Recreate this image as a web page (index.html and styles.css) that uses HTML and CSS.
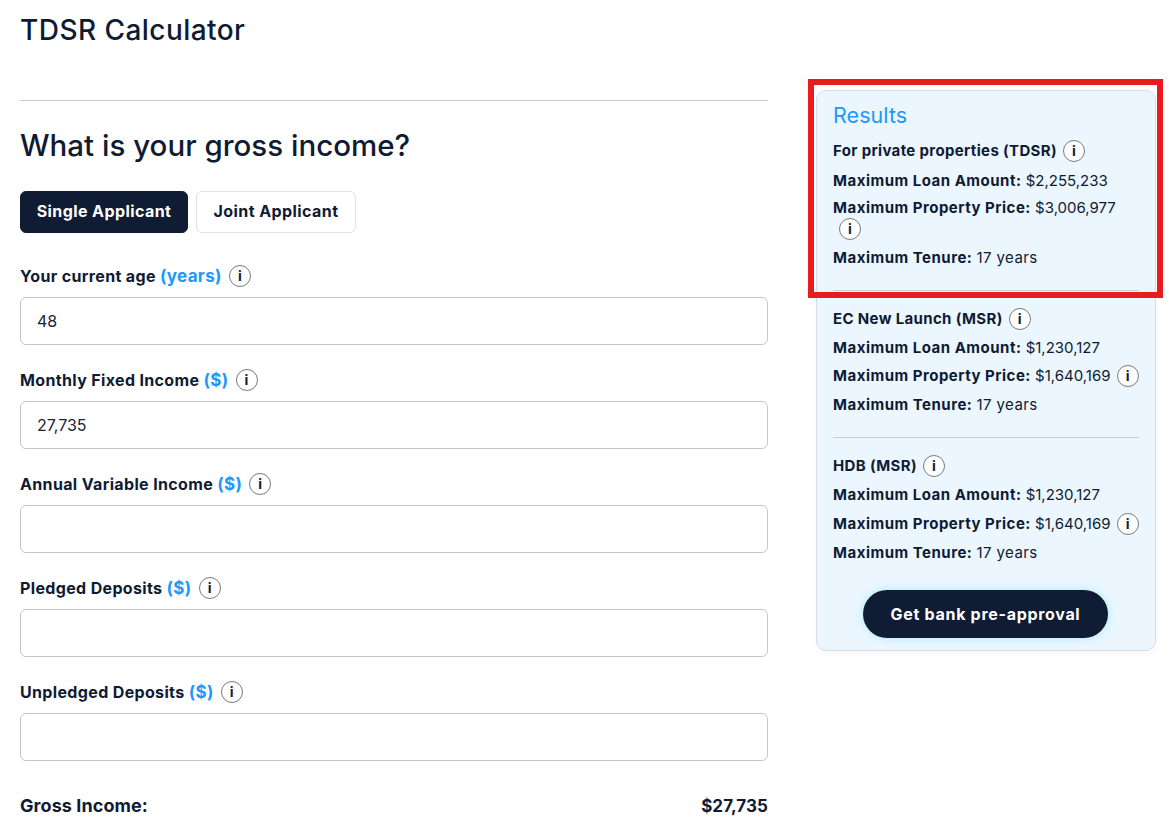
FILE: index.html
```html
<!DOCTYPE html>
<html lang="en">
<head>
<meta charset="utf-8">
<title>TDSR Calculator</title>
<link rel="stylesheet" href="styles.css">
</head>
<body>
<div class="page">
  <h1 class="title">TDSR Calculator</h1>
  <div class="columns">
    <main class="form">
      <hr class="form-rule">
      <h2 class="question">What is your gross income?</h2>
      <div class="tabs">
        <button class="tab tab-active">Single Applicant</button>
        <button class="tab">Joint Applicant</button>
      </div>
      <div class="field">
        <div class="label">Your current age <span class="unit">(years)</span><span class="info">i</span></div>
        <div class="input">48</div>
      </div>
      <div class="field">
        <div class="label">Monthly Fixed Income <span class="unit">($)</span><span class="info">i</span></div>
        <div class="input">27,735</div>
      </div>
      <div class="field">
        <div class="label">Annual Variable Income <span class="unit">($)</span><span class="info">i</span></div>
        <div class="input"></div>
      </div>
      <div class="field">
        <div class="label">Pledged Deposits <span class="unit">($)</span><span class="info">i</span></div>
        <div class="input"></div>
      </div>
      <div class="field">
        <div class="label">Unpledged Deposits <span class="unit">($)</span><span class="info">i</span></div>
        <div class="input"></div>
      </div>
      <div class="total"><span>Gross Income:</span><span class="total-value">$27,735</span></div>
    </main>
    <aside class="panel">
      <h3 class="panel-title">Results</h3>
      <div class="row with-info"><b class="head">For private properties (TDSR)</b><span class="info">i</span></div>
      <div class="row"><span><b>Maximum Loan Amount:</b> $2,255,233</span></div>
      <div class="row-wrap">
        <div class="wrap-line"><b>Maximum Property Price:</b> $3,006,977</div>
        <div class="wrap-line"><span class="info info-wrapped">i</span></div>
      </div>
      <div class="row"><span><b>Maximum Tenure:</b> <span class="years">17 years</span></span></div>
      <hr class="panel-rule">
      <div class="row with-info"><b class="head">EC New Launch (MSR)</b><span class="info">i</span></div>
      <div class="row"><span><b>Maximum Loan Amount:</b> $1,230,127</span></div>
      <div class="row with-info"><span><b>Maximum Property Price:</b> $1,640,169</span><span class="info">i</span></div>
      <div class="row"><span><b>Maximum Tenure:</b> <span class="years">17 years</span></span></div>
      <hr class="panel-rule">
      <div class="row with-info"><b class="head">HDB (MSR)</b><span class="info">i</span></div>
      <div class="row"><span><b>Maximum Loan Amount:</b> $1,230,127</span></div>
      <div class="row with-info"><span><b>Maximum Property Price:</b> $1,640,169</span><span class="info">i</span></div>
      <div class="row"><span><b>Maximum Tenure:</b> <span class="years">17 years</span></span></div>
      <button class="cta">Get bank pre-approval</button>
    </aside>
  </div>
</div>
<div class="highlight"></div>
</body>
</html>
```
FILE: styles.css
```css
* { box-sizing: border-box; }
html, body { margin: 0; height: 829px; overflow: hidden; background: #fff; }
body { font-family: Inter, "Noto Sans", sans-serif; color: #0f1b33; position: relative; }
.page { padding: 0 15px 0 20px; }
.title { margin: 0; height: 60px; padding-top: 12px; font-size: 28px; line-height: 36px; font-weight: 500; letter-spacing: .45px; }
.columns { display: flex; align-items: flex-start; justify-content: space-between; padding-top: 30px; }
.form { width: 748px; padding-top: 10px; }
.form-rule { margin: 0; border: 0; border-top: 1px solid #c9c9c9; }
.question { margin: 0; padding-top: 24px; height: 90px; font-size: 29.5px; line-height: 40px; font-weight: 500; }
.tabs { display: flex; gap: 8px; }
.tab { height: 42px; border-radius: 6px; border: 1px solid #dfe2e6; background: #fff; color: #0f1b33; font: 700 16px/1 Inter, sans-serif; letter-spacing: .42px; padding: 0 0 2px; width: 160px; }
.tab-active { width: 168px; background: #0f1c33; border-color: #0f1c33; color: #fff; }
.field { margin-top: 23px; height: 81px; }
.tabs + .field { margin-top: 31px; }
.label { display: flex; align-items: center; height: 24px; margin-bottom: 9px; font-size: 16px; font-weight: 700; letter-spacing: .35px; white-space: pre; }
.unit { color: #1e98fb; font-size: 17px; }
.info { display: inline-flex; flex: none; align-items: center; justify-content: center; width: 22px; height: 22px; margin-left: 7px; border: 1.5px solid #7a7a7a; border-radius: 50%; background: #fff; color: #0f1b33; font: 700 14px/1 Inter, sans-serif; letter-spacing: 0; }
.input { height: 48px; border: 1px solid #c6c6c6; border-radius: 6px; padding: 0 16px; font-size: 16px; line-height: 46px; color: #1b2438; }
.total { display: flex; justify-content: space-between; margin-top: 32px; font-size: 18px; font-weight: 700; line-height: 26px; letter-spacing: .08px; }
.total-value { font-size: 17px; }
.panel { width: 340px; height: 561px; padding: 11px 16px 0; background: #ebf6ff; border: 1px solid #d8dde3; border-radius: 10px; box-shadow: 0 3px 8px rgba(0,0,0,.03); display: flex; flex-direction: column; }
.panel-title { margin: 0; height: 35px; font-size: 21.5px; line-height: 26px; font-weight: 400; color: #1e98fb; letter-spacing: .05px; }
.row { display: flex; align-items: center; height: 28.7px; font-size: 15px; white-space: nowrap; flex: none; }
.row b, .wrap-line b { font-weight: 700; letter-spacing: .5px; }
.row b.head { letter-spacing: .35px; }
.years { letter-spacing: .4px; }
.row.with-info > :first-child { padding-bottom: 1px; }
.row.with-info .info { margin-left: 6px; }
.row-wrap { height: 49px; padding-top: 2px; font-size: 15px; flex: none; }
.wrap-line { display: flex; align-items: center; height: 22px; white-space: pre; }
.info-wrapped { margin-left: 6px; }
.panel-rule { width: 100%; margin: 18px 0 13.5px; border: 0; border-top: 1px solid #c9ced4; flex: none; }
.cta { flex: none; align-self: center; width: 245px; height: 48px; margin: 23px 1px 0 0; border: 0; border-radius: 24px; background: #0f1c33; color: #fff; font: 700 16px/1 Inter, sans-serif; letter-spacing: .7px; box-shadow: 0 0 9px #a8ebf7; }
.highlight { position: absolute; left: 808px; top: 79px; width: 355px; height: 219px; border: 6px solid #e71c1f; }
```
